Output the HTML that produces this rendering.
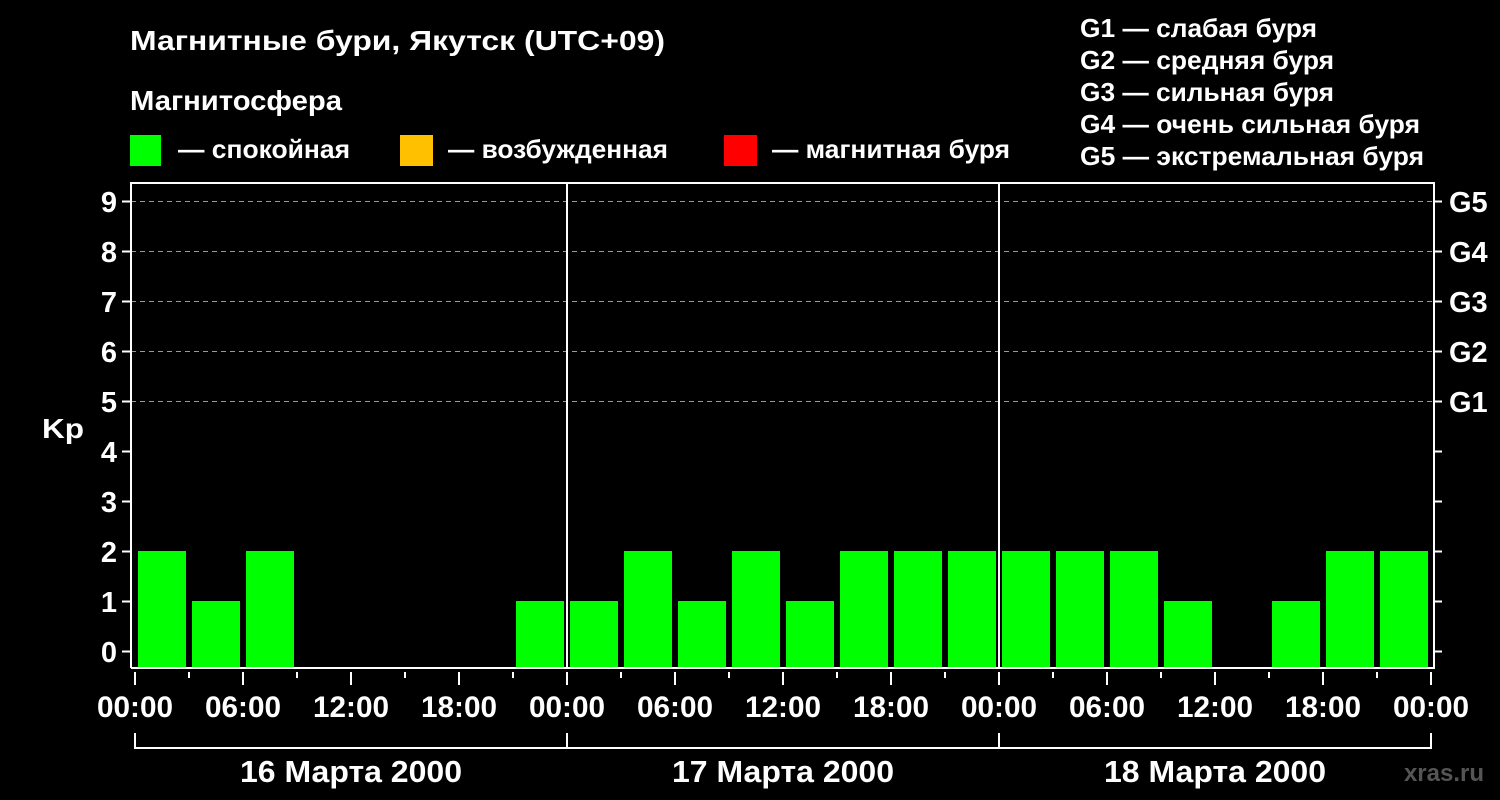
<!DOCTYPE html>
<html><head><meta charset="utf-8"><style>
html,body{margin:0;padding:0;background:#000;width:1500px;height:800px;overflow:hidden}
svg text{font-family:"Liberation Sans",sans-serif;font-weight:bold;fill:#fff}
</style></head><body>
<svg width="1500" height="800" viewBox="0 0 1500 800" xmlns="http://www.w3.org/2000/svg">
<rect width="1500" height="800" fill="#000"/>
<text x="130" y="50" font-size="28" textLength="535" lengthAdjust="spacingAndGlyphs">Магнитные бури, Якутск (UTC+09)</text>
<text x="130" y="110" font-size="28" textLength="212" lengthAdjust="spacingAndGlyphs">Магнитосфера</text>
<rect x="130" y="135" width="31" height="31" fill="#00ff00"/>
<text x="178" y="158" font-size="26" textLength="172" lengthAdjust="spacingAndGlyphs">— спокойная</text>
<rect x="400" y="135" width="33" height="31" fill="#ffc000"/>
<text x="448" y="158" font-size="26" textLength="220" lengthAdjust="spacingAndGlyphs">— возбужденная</text>
<rect x="724" y="135" width="33" height="31" fill="#ff0000"/>
<text x="772" y="158" font-size="26" textLength="238" lengthAdjust="spacingAndGlyphs">— магнитная буря</text>
<g font-size="26">
<text x="1080" y="37" textLength="237" lengthAdjust="spacingAndGlyphs">G1 — слабая буря</text>
<text x="1080" y="69" textLength="254" lengthAdjust="spacingAndGlyphs">G2 — средняя буря</text>
<text x="1080" y="101" textLength="254" lengthAdjust="spacingAndGlyphs">G3 — сильная буря</text>
<text x="1080" y="133" textLength="340" lengthAdjust="spacingAndGlyphs">G4 — очень сильная буря</text>
<text x="1080" y="165" textLength="344" lengthAdjust="spacingAndGlyphs">G5 — экстремальная буря</text>
</g>
<g stroke="#999" stroke-width="1" stroke-dasharray="5,4">
<line x1="131" y1="201.5" x2="1434" y2="201.5"/>
<line x1="131" y1="251.5" x2="1434" y2="251.5"/>
<line x1="131" y1="301.5" x2="1434" y2="301.5"/>
<line x1="131" y1="351.5" x2="1434" y2="351.5"/>
<line x1="131" y1="401.5" x2="1434" y2="401.5"/>
</g>
<g fill="#00ff00">
<rect x="138" y="551" width="48" height="117"/>
<rect x="192" y="601" width="48" height="67"/>
<rect x="246" y="551" width="48" height="117"/>
<rect x="516" y="601" width="48" height="67"/>
<rect x="570" y="601" width="48" height="67"/>
<rect x="624" y="551" width="48" height="117"/>
<rect x="678" y="601" width="48" height="67"/>
<rect x="732" y="551" width="48" height="117"/>
<rect x="786" y="601" width="48" height="67"/>
<rect x="840" y="551" width="48" height="117"/>
<rect x="894" y="551" width="48" height="117"/>
<rect x="948" y="551" width="48" height="117"/>
<rect x="1002" y="551" width="48" height="117"/>
<rect x="1056" y="551" width="48" height="117"/>
<rect x="1110" y="551" width="48" height="117"/>
<rect x="1164" y="601" width="48" height="67"/>
<rect x="1272" y="601" width="48" height="67"/>
<rect x="1326" y="551" width="48" height="117"/>
<rect x="1380" y="551" width="48" height="117"/>
</g>
<g stroke="#fff" stroke-width="2" fill="none">
<path d="M131 668V183H1434V668H131"/>
<line x1="567" y1="183" x2="567" y2="668"/>
<line x1="999" y1="183" x2="999" y2="668"/>
<path d="M122 201.5h9M122 251.5h9M122 301.5h9M122 351.5h9M122 401.5h9M122 451.5h9M122 501.5h9M122 551.5h9M122 601.5h9M122 651.5h9"/>
<path d="M1434 201.5h8M1434 251.5h8M1434 301.5h8M1434 351.5h8M1434 401.5h8M1434 451.5h8M1434 501.5h8M1434 551.5h8M1434 601.5h8M1434 651.5h8"/>
<path d="M135 672v13M243 672v13M351 672v13M459 672v13M567 672v13M675 672v13M783 672v13M891 672v13M999 672v13M1107 672v13M1215 672v13M1323 672v13M1431 672v13"/>
<path d="M189 672v6M297 672v6M405 672v6M513 672v6M621 672v6M729 672v6M837 672v6M945 672v6M1053 672v6M1161 672v6M1269 672v6M1377 672v6"/>
<path d="M135 733v15H1431V733M567 733v15M999 733v15"/>
</g>
<g font-size="29" text-anchor="end">
<text x="117" y="212">9</text><text x="117" y="262">8</text><text x="117" y="312">7</text>
<text x="117" y="362">6</text><text x="117" y="412">5</text><text x="117" y="462">4</text>
<text x="117" y="512">3</text><text x="117" y="562">2</text><text x="117" y="612">1</text>
<text x="117" y="662">0</text>
</g>
<text x="42" y="438" font-size="28" textLength="42" lengthAdjust="spacingAndGlyphs">Kp</text>
<g font-size="29">
<text x="1449" y="212">G5</text><text x="1449" y="262">G4</text><text x="1449" y="312">G3</text>
<text x="1449" y="362">G2</text><text x="1449" y="412">G1</text>
</g>
<g font-size="30" text-anchor="middle">
<text x="135" y="717" textLength="76" lengthAdjust="spacingAndGlyphs">00:00</text><text x="243" y="717" textLength="76" lengthAdjust="spacingAndGlyphs">06:00</text><text x="351" y="717" textLength="76" lengthAdjust="spacingAndGlyphs">12:00</text><text x="459" y="717" textLength="76" lengthAdjust="spacingAndGlyphs">18:00</text>
<text x="567" y="717" textLength="76" lengthAdjust="spacingAndGlyphs">00:00</text><text x="675" y="717" textLength="76" lengthAdjust="spacingAndGlyphs">06:00</text><text x="783" y="717" textLength="76" lengthAdjust="spacingAndGlyphs">12:00</text><text x="891" y="717" textLength="76" lengthAdjust="spacingAndGlyphs">18:00</text>
<text x="999" y="717" textLength="76" lengthAdjust="spacingAndGlyphs">00:00</text><text x="1107" y="717" textLength="76" lengthAdjust="spacingAndGlyphs">06:00</text><text x="1215" y="717" textLength="76" lengthAdjust="spacingAndGlyphs">12:00</text><text x="1323" y="717" textLength="76" lengthAdjust="spacingAndGlyphs">18:00</text>
<text x="1431" y="717" textLength="76" lengthAdjust="spacingAndGlyphs">00:00</text>
</g>
<g font-size="31" text-anchor="middle">
<text x="351" y="782" textLength="222" lengthAdjust="spacingAndGlyphs">16 Марта 2000</text>
<text x="783" y="782" textLength="222" lengthAdjust="spacingAndGlyphs">17 Марта 2000</text>
<text x="1215" y="782" textLength="222" lengthAdjust="spacingAndGlyphs">18 Марта 2000</text>
</g>
<text x="1484" y="781" font-size="24" text-anchor="end" style="fill:#555">xras.ru</text>
</svg>
</body></html>
